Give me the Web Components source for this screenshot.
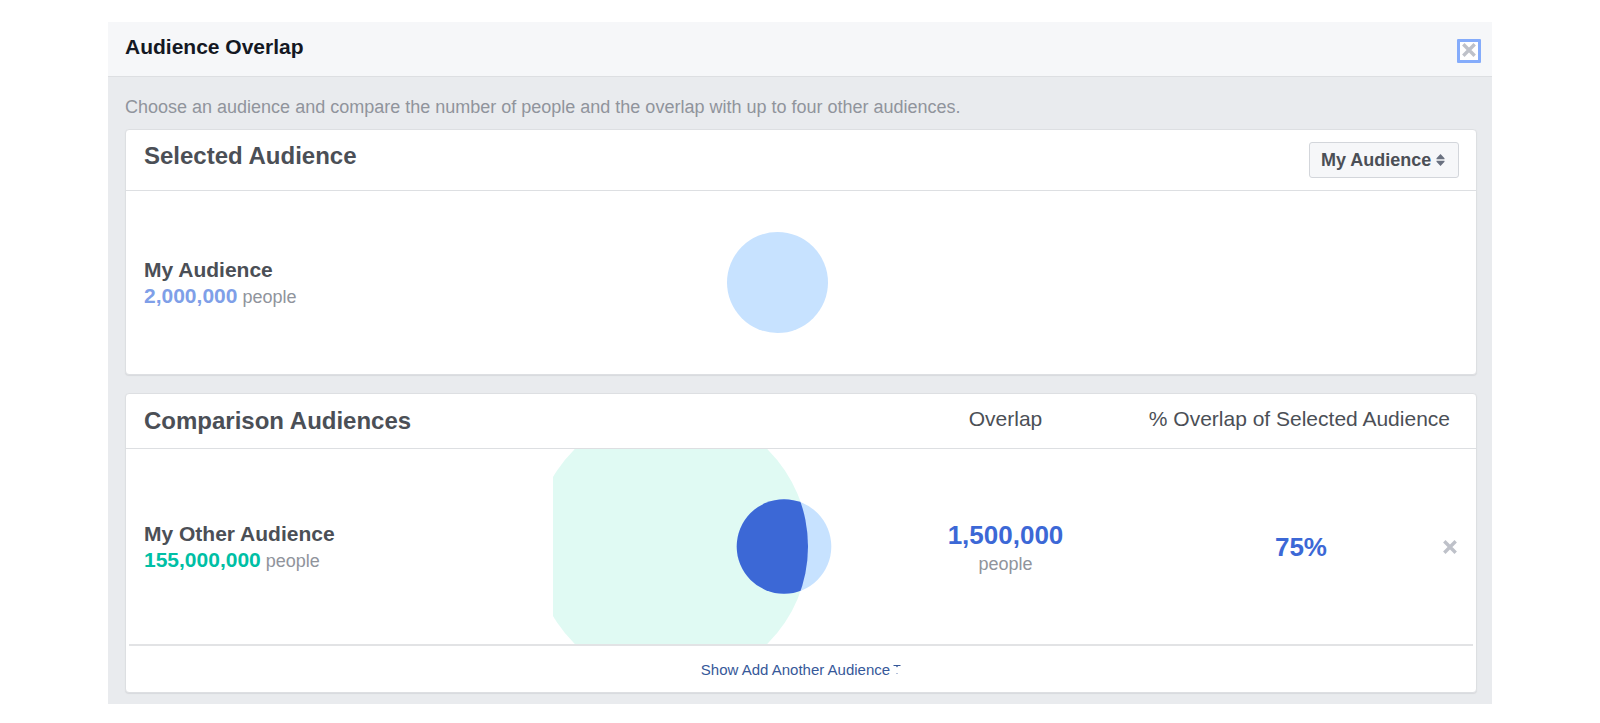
<!DOCTYPE html>
<html lang="en">
<head>
<meta charset="utf-8">
<title>Audience Overlap</title>
<style>
  body {
    margin: 0;
    padding: 22px 108px 19px;
    background: #fff;
    font-family: "Liberation Sans", Arial, Helvetica, sans-serif;
    color: #4b4f56;
    --line: #dddfe2;
    --muted: #90949c;
    --blue: #3c68d6;
    --viz: 330px;
    --stats: 593px;
  }
</style>
</head>
<body>
<overlap-dialog heading="Audience Overlap">
  <span slot="intro">Choose an audience and compare the number of people and the overlap with up to four other audiences.</span>
  <selected-audience></selected-audience>
  <comparison-audiences></comparison-audiences>
</overlap-dialog>

<script>
class ShadowElement extends HTMLElement {
  connectedCallback() {
    if (this.shadowRoot) return;
    const t = document.createElement('template');
    t.innerHTML = this.render();
    this.attachShadow({ mode: 'open' }).append(t.content.cloneNode(true));
  }
}

customElements.define('cross-icon', class extends ShadowElement {
  render() {
    return `
      <style>
        :host { display: block; width: 14px; height: 14px; }
        svg { display: block; }
      </style>
      <svg width="14" height="14" viewBox="0 0 14 14" aria-hidden="true">
        <path d="M1.3 1.3 12.7 12.7M12.7 1.3 1.3 12.7" fill="none" stroke="#bec1c9" stroke-width="3.4"/>
      </svg>`;
  }
});

customElements.define('overlap-dialog', class extends ShadowElement {
  render() {
    return `
      <style>
        :host { display: block; background: #e9ebee; }
        header {
          display: flex; justify-content: space-between; align-items: center;
          height: 54px; padding: 0 11px 0 17px;
          background: #f6f7f9; border-bottom: 1px solid var(--line);
        }
        h1 { margin: 0; padding-bottom: 4px; font-size: 21px; line-height: 26px; color: #141823; }
        button {
          display: grid; place-items: center; width: 24px; height: 24px;
          margin: 4px 0 0; padding: 0 0 2px; background: #fff; border: 0; border-radius: 1px;
          box-shadow: inset 0 0 0 3px #85acfb;
        }
        p { margin: 0; padding-bottom: 12px; font-size: 18px; line-height: 20px; color: var(--muted); }
        main { display: flow-root; padding: 20px 15px 11px 17px; }
      </style>
      <header>
        <h1>${this.getAttribute('heading')}</h1>
        <button type="button" aria-label="Close"><cross-icon></cross-icon></button>
      </header>
      <main><p><slot name="intro"></slot></p><slot></slot></main>`;
  }
});

customElements.define('audience-name', class extends ShadowElement {
  render() {
    return `
      <style>
        :host { display: block; padding-top: 2px; font-size: 21px; line-height: 26px; text-align: left; }
        h3, p { margin: 0; font-size: inherit; }
        b { color: var(--count, #7f9fe8); }
        small { font-size: 18px; color: var(--muted); }
      </style>
      <h3><slot></slot></h3>
      <p><b>${this.getAttribute('count')}</b><small> people</small></p>`;
  }
});

customElements.define('venn-chart', class extends ShadowElement {
  render() {
    const single = `<circle cx="224.5" cy="97.5" r="50.5" fill="#c7e2ff"/>`;
    const pair = `
      <defs><clipPath id="big"><circle cx="118" cy="97.5" r="137"/></clipPath></defs>
      <circle cx="118" cy="97.5" r="137" fill="#e0faf3"/>
      <circle cx="231" cy="97.5" r="47.3" fill="#c7e2ff"/>
      <circle cx="231" cy="97.5" r="47.3" fill="#3c68d6" clip-path="url(#big)"/>`;
    const both = this.hasAttribute('compare');
    return `
      <style>
        :host { display: block; }
        svg { display: block; width: 100%; }
      </style>
      <svg height="${both ? 195 : 183}" viewBox="0 ${both ? 0 : 6} 330 ${both ? 195 : 183}" role="img" aria-label="Audience size">${both ? pair : single}</svg>`;
  }
});

const card = `
  :host {
    display: block; background: #fff; border: 1px solid var(--line);
    border-radius: 4px; box-shadow: 0 1px 1px #d8dadd;
  }
  h2 { margin: 0; font-size: 24px; line-height: 28px; }`;

customElements.define('selected-audience', class extends ShadowElement {
  render() {
    return `
      <style>
        ${card}
        header {
          display: flex; justify-content: space-between; align-items: flex-start;
          padding: 12px 17px 12px 18px; border-bottom: 1px solid var(--line);
        }
        label { position: relative; display: block; }
        select {
          appearance: none; display: block; width: 150px; height: 36px; margin: 0; padding: 0 11px;
          font: bold 18px/20px "Liberation Sans", Arial, sans-serif; color: #4b4f56;
          background: #f6f7f9; border: 1px solid #d3d6db; border-radius: 3px;
        }
        label svg { position: absolute; right: 14px; top: 12px; pointer-events: none; }
        section { display: grid; grid-template-columns: 1fr var(--viz) var(--stats); align-items: center; }
        audience-name { padding-left: 18px; }
      </style>
      <header>
        <h2>Selected Audience</h2>
        <label>
          <select aria-label="Selected audience"><option>My Audience</option></select>
          <svg width="9" height="12" viewBox="0 0 9 12" aria-hidden="true">
            <path d="M4.5 0 8.5 4.2V5.2H.5V4.2ZM4.5 12 8.5 7.8V6.8H.5V7.8Z" fill="#6a7180"/>
          </svg>
        </label>
      </header>
      <section>
        <audience-name count="2,000,000">My Audience</audience-name>
        <venn-chart></venn-chart>
      </section>`;
  }
});

customElements.define('comparison-audiences', class extends ShadowElement {
  render() {
    return `
      <style>
        ${card}
        :host { margin-top: 18px; }
        table { width: 100%; table-layout: fixed; border-collapse: separate; border-spacing: 0; }
        .viz { width: var(--viz); } .overlap { width: 245px; } .share { width: 308px; } .remove { width: 40px; }
        th, td { padding: 0; }
        th { height: 55px; border-bottom: 1px solid var(--line); box-sizing: border-box; font-size: 21px; font-weight: 400; line-height: 24px; white-space: nowrap; }
        th.stat { padding-bottom: 4px; }
        th:first-child { padding-left: 18px; text-align: left; }
        th:last-child { padding-right: 26px; text-align: right; }
        td { text-align: center; color: var(--blue); font-size: 26px; line-height: 30px; font-weight: 700; }
        td:first-child { padding-left: 18px; --count: #00bfa5; color: #4b4f56; }
        td.people { padding-top: 4px; }
        td.pct { padding-left: 38px; }
        td small { display: block; font-size: 18px; line-height: 28px; font-weight: 400; color: var(--muted); }
        audience-name { font-weight: 400; }
        td button { display: grid; place-items: center; width: 28px; height: 28px; padding: 0; border: 0; background: none; }
        footer {
          display: flex; justify-content: center; margin: 0 3px; padding: 4px 0 2px;
          border-top: 2px solid #e2e3e5; font-size: 15px; line-height: 40px;
        }
        a { display: flex; align-items: center; gap: 3px; color: #365899; text-decoration: none; }
      </style>
      <table>
        <colgroup><col><col class="viz"><col class="overlap"><col class="share"><col class="remove"></colgroup>
        <thead><tr>
          <th colspan="2" scope="col"><h2>Comparison Audiences</h2></th>
          <th class="stat" scope="col">Overlap</th>
          <th class="stat" colspan="2" scope="col">% Overlap of Selected Audience</th>
        </tr></thead>
        <tbody><tr>
          <td><audience-name count="155,000,000">My Other Audience</audience-name></td>
          <td><venn-chart compare></venn-chart></td>
          <td class="people">1,500,000<small>people</small></td>
          <td class="pct">75%</td>
          <td><button type="button" aria-label="Remove My Other Audience"><cross-icon></cross-icon></button></td>
        </tr></tbody>
      </table>
      <footer>
        <a href="#add">Show Add Another Audience
          <svg width="8" height="12" viewBox="0 0 8 12" aria-hidden="true">
            <path d="M0 1H8L7 2H5L4 3.5 3 2H1Z" fill="#365899"/><path d="M3 9H5V10H3Z" fill="#b5c1da"/>
          </svg>
        </a>
      </footer>`;
  }
});
</script>
</body>
</html>
